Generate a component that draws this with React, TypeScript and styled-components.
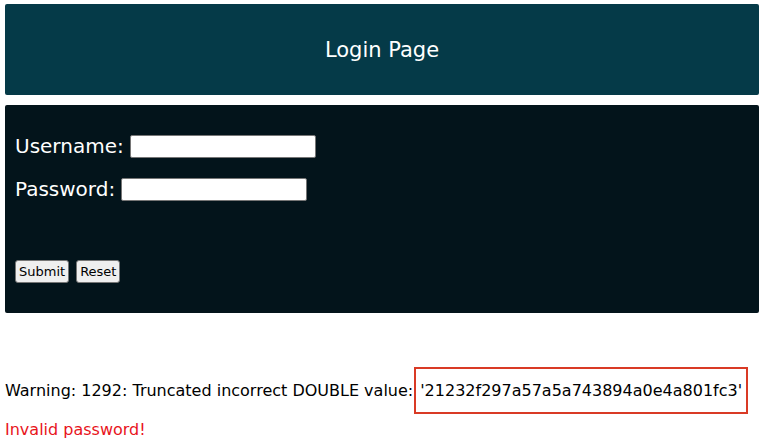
import styled, { createGlobalStyle } from 'styled-components'

const GlobalStyle = createGlobalStyle`
  body {
    margin: 0;
    background: #ffffff;
    font-family: 'DejaVu Sans', sans-serif;
  }
`

const Page = styled.div`
  padding: 4px 6px 0 5px;
`

const Header = styled.header`
  height: 91px;
  display: flex;
  align-items: center;
  justify-content: center;
  background: #053a48;
  border-radius: 2px;
  color: #ffffff;
  font-size: 21px;
`

const LoginForm = styled.form`
  margin-top: 10px;
  height: 208px;
  padding: 28px 10px 0;
  box-sizing: border-box;
  background: #03141b;
  border-radius: 2px;
  color: #ffffff;
`

const Field = styled.label`
  display: flex;
  align-items: center;
  gap: 6px;
  font-size: 20px;
  height: 26px;
  margin-bottom: 17px;
`

const TextInput = styled.input`
  width: 186px;
  height: 23px;
  box-sizing: border-box;
  border: 1px solid #767676;
  border-radius: 2px;
  background: #ffffff;
  margin: 0;
`

const Buttons = styled.div`
  display: flex;
  gap: 7px;
  margin-top: 58px;
`

const Button = styled.button`
  height: 23px;
  padding: 0 3px;
  font-family: 'DejaVu Sans', sans-serif;
  font-size: 13px;
  color: #000000;
  background: #efefef;
  border: 1px solid #767676;
  border-radius: 3px;
`

const Warning = styled.p`
  margin: 54px 0 0;
  font-size: 16px;
  color: #000000;
  display: flex;
  align-items: center;
`

const Highlight = styled.span`
  display: inline-block;
  margin-left: 1px;
  padding: 12px 4px;
  border: 2px solid #d93a25;
`

const ErrorText = styled.p`
  margin: 6px 0 0;
  font-size: 16px;
  color: #e8141c;
`

export default function App() {
  return (
    <>
      <GlobalStyle />
      <Page>
        <Header>Login Page</Header>
        <LoginForm onSubmit={(e) => e.preventDefault()}>
          <Field>
            Username: <TextInput type="text" />
          </Field>
          <Field>
            Password: <TextInput type="password" />
          </Field>
          <Buttons>
            <Button type="submit">Submit</Button>
            <Button type="reset">Reset</Button>
          </Buttons>
        </LoginForm>
        <Warning>
          Warning: 1292: Truncated incorrect DOUBLE value:
          <Highlight>'21232f297a57a5a743894a0e4a801fc3'</Highlight>
        </Warning>
        <ErrorText>Invalid password!</ErrorText>
      </Page>
    </>
  )
}
